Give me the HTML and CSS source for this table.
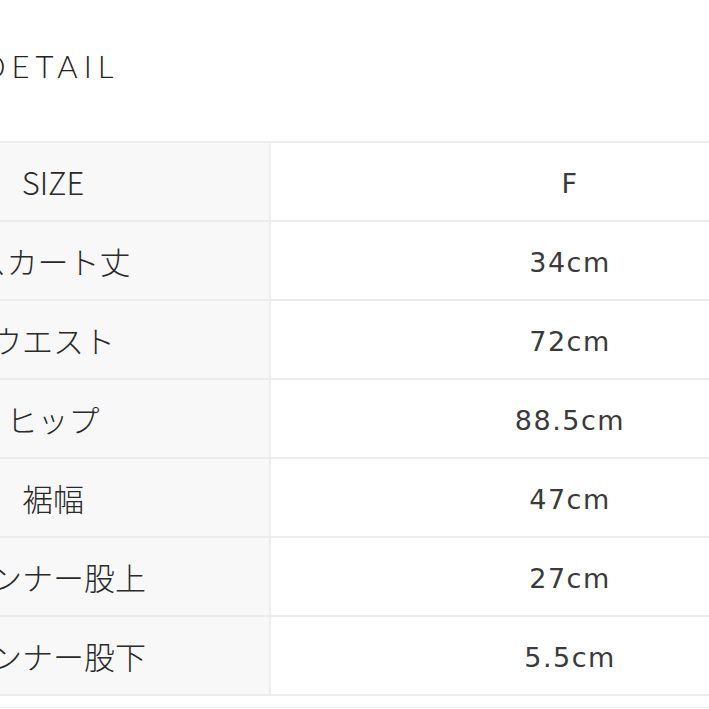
FILE: index.html
```html
<!DOCTYPE html>
<html lang="ja">
<head>
<meta charset="utf-8">
<link rel="stylesheet" href="styles.css">
</head>
<body>
<div class="page">
  <h2 class="title">DETAIL</h2>
  <table class="spec">
    <tbody>
      <tr><th>SIZE</th><td>F</td></tr>
      <tr><th>スカート丈</th><td>34cm</td></tr>
      <tr><th>ウエスト</th><td>72cm</td></tr>
      <tr><th>ヒップ</th><td>88.5cm</td></tr>
      <tr><th>裾幅</th><td>47cm</td></tr>
      <tr><th>インナー股上</th><td>27cm</td></tr>
      <tr><th>インナー股下</th><td>5.5cm</td></tr>
    </tbody>
  </table>
  <div class="next"></div>
</div>
</body>
</html>
```

FILE: styles.css
```css
html, body {
  margin: 0;
  padding: 0;
  overflow: hidden;
  background: #ffffff;
}
.page {
  width: 709px;
  height: 709px;
  overflow: hidden;
}
.title {
  margin: 0 0 59px -18px;
  padding-top: 50px;
  font-family: "Lato", "Liberation Sans", sans-serif;
  font-weight: 300;
  font-size: 31px;
  line-height: 32px;
  height: 32px;
  letter-spacing: 6px;
  color: #222222;
}
.spec {
  border-collapse: collapse;
  width: 1032px;
  margin-left: -163px;
  table-layout: fixed;
  font-family: "DejaVu Sans", "Liberation Sans", "Noto Sans CJK JP", sans-serif;
  color: #3a3a3a;
  font-size: 27px;
  letter-spacing: 1.5px;
}
.spec tr {
  height: 79px;
}
.spec th,
.spec td {
  border-top: 2px solid #ececec;
  border-bottom: 2px solid #ececec;
  text-align: center;
  vertical-align: middle;
  padding: 3px 0 0 0;
  font-weight: 400;
}
.spec th {
  width: 432px;
  background: #f8f8f8;
  border-right: 2px solid #ededed;
  font-family: "Noto Sans CJK JP", "Liberation Sans", sans-serif;
  font-size: 31px;
  font-weight: 300;
  letter-spacing: 0;
  padding-top: 0;
  color: #2a2a2a;
}
.spec td {
  background: #ffffff;
}
.next {
  margin-top: 11px;
  border-top: 1px solid #f0f0f0;
}
```
